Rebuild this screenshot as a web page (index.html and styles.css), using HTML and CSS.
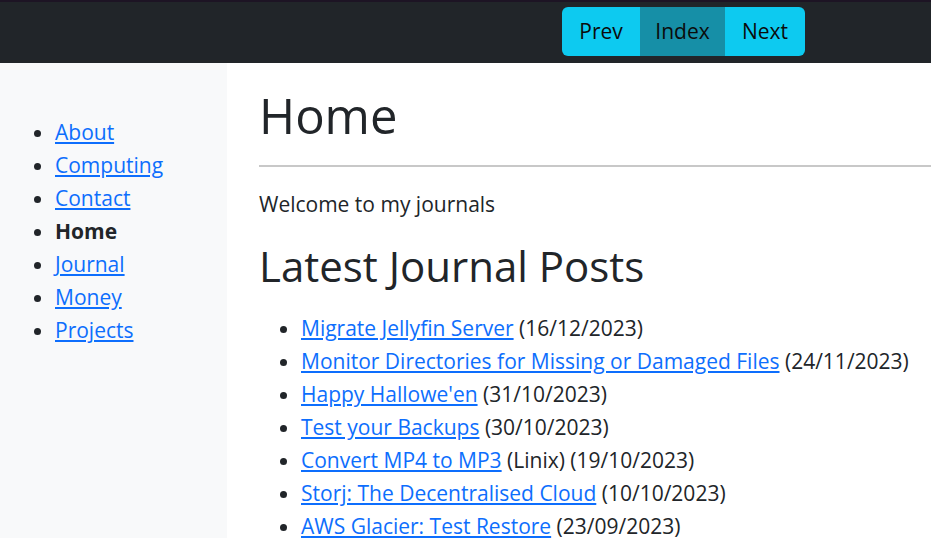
FILE: index.html
```html
<!DOCTYPE html>
<html lang="en">
<head>
<meta charset="utf-8">
<title>Home</title>
<link rel="stylesheet" href="styles.css">
</head>
<body>
<div class="topstrip"></div>
<header class="topbar">
  <nav class="btn-group">
    <a class="btn" href="#">Prev</a>
    <a class="btn active" href="#">Index</a>
    <a class="btn" href="#">Next</a>
  </nav>
</header>
<div class="layout">
  <aside class="sidebar">
    <ul class="side-list">
      <li><a href="#">About</a></li>
      <li><a href="#">Computing</a></li>
      <li><a href="#">Contact</a></li>
      <li><strong>Home</strong></li>
      <li><a href="#">Journal</a></li>
      <li><a href="#">Money</a></li>
      <li><a href="#">Projects</a></li>
    </ul>
  </aside>
  <main class="content">
    <h1 class="title">Home</h1>
    <hr class="rule">
    <p class="intro">Welcome to my journals</p>
    <h2 class="subtitle">Latest Journal Posts</h2>
    <ul class="posts">
      <li><a href="#">Migrate Jellyfin Server</a> (16/12/2023)</li>
      <li><a href="#">Monitor Directories for Missing or Damaged Files</a> (24/11/2023)</li>
      <li><a href="#">Happy Hallowe'en</a> (31/10/2023)</li>
      <li><a href="#">Test your Backups</a> (30/10/2023)</li>
      <li><a href="#">Convert MP4 to MP3</a> (Linix) (19/10/2023)</li>
      <li><a href="#">Storj: The Decentralised Cloud</a> (10/10/2023)</li>
      <li><a href="#">AWS Glacier: Test Restore</a> (23/09/2023)</li>
    </ul>
  </main>
</div>
</body>
</html>
```

FILE: styles.css
```css
html, body {
  margin: 0;
  padding: 0;
}
body {
  font-family: "Open Sans", "Noto Sans", sans-serif;
  font-size: 21px;
  line-height: 33px;
  color: #212529;
  background: #fff;
  overflow: hidden;
}
a {
  color: #0d6efd;
  text-decoration: underline;
}
.topstrip {
  height: 2px;
  background: #1d1424;
}
.topbar {
  height: 61px;
  background: #212529;
  display: flex;
  align-items: flex-start;
  padding-left: 562px;
  box-sizing: border-box;
  padding-top: 5px;
}
.btn-group {
  display: flex;
  height: 49px;
  border-radius: 6px;
  overflow: hidden;
}
.btn {
  display: flex;
  align-items: center;
  justify-content: center;
  color: #0b0b0b;
  text-decoration: none;
  background: #0dcaf0;
  font-size: 21px;
}
.btn:nth-child(1) { width: 78px; }
.btn:nth-child(2) { width: 85px; }
.btn:nth-child(3) { width: 80px; }
.btn.active {
  background: #168fa7;
}
.layout {
  display: flex;
  min-height: 475px;
}
.sidebar {
  width: 227px;
  flex: none;
  background: #f8f9fa;
  padding-top: 53px;
  box-sizing: border-box;
}
.side-list {
  margin: 0;
  padding-left: 55px;
}
.side-list strong {
  font-weight: 700;
  color: #212529;
}
.content {
  flex: 1;
  padding-left: 32px;
  min-width: 0;
}
.title {
  font-size: 49px;
  font-weight: 500;
  line-height: 58px;
  margin: 23px 0 0 0;
}
.rule {
  border: 0;
  border-top: 2px solid #c8c8c8;
  margin: 21px 0 0 0;
  width: 700px;
}
.intro {
  margin: 21px 0 0 0;
}
.subtitle {
  font-size: 42px;
  font-weight: 500;
  line-height: 48px;
  margin: 21px 0 0 0;
}
.posts {
  margin: 22px 0 0 0;
  padding-left: 42px;
}
```
